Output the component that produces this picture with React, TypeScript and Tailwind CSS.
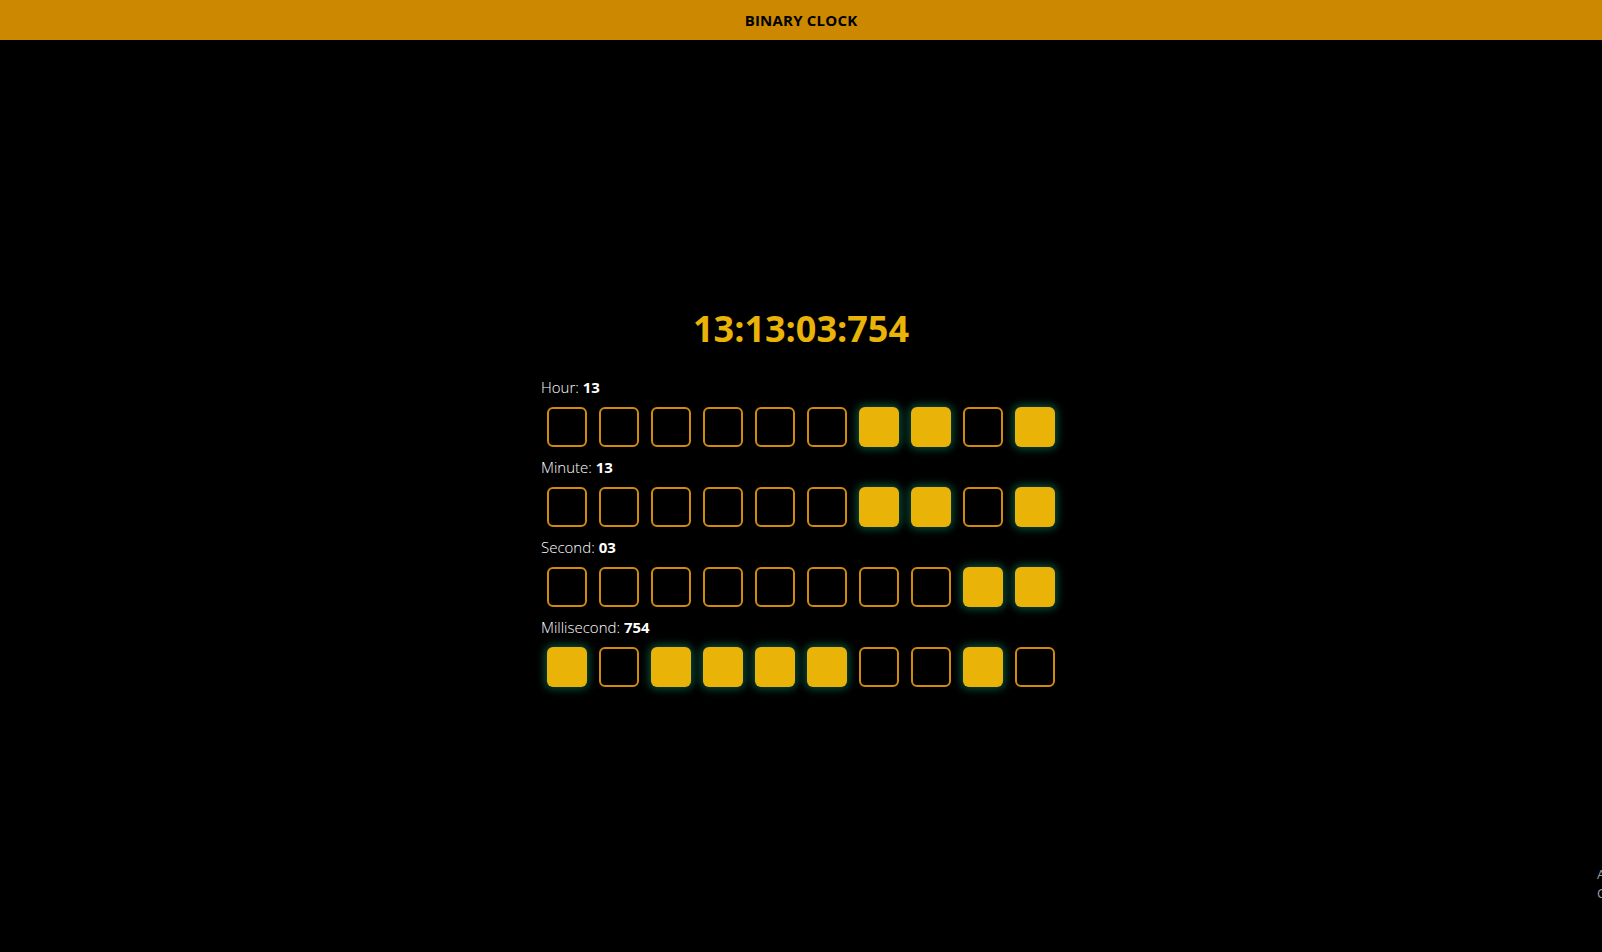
import React from 'react';

// 二进制时钟 - 静态快照 13:13:03:754
const FONT = { fontFamily: '"Open Sans", "Noto Sans", sans-serif' };

const toBits = (n: number) => n.toString(2).padStart(10, '0').split('').map((b) => b === '1');

const rows = [
  { label: 'Hour', value: '13', num: 13 },
  { label: 'Minute', value: '13', num: 13 },
  { label: 'Second', value: '03', num: 3 },
  { label: 'Millisecond', value: '754', num: 754 },
];

function BitBox({ on }: { on: boolean }) {
  return (
    <div
      className={`w-10 h-10 mx-[6px] rounded-[6px] ${
        on
          ? 'bg-[#eab308] shadow-[0_0_9px_2px_rgba(20,150,110,0.55)]'
          : 'border-2 border-[#d18a0c]'
      }`}
    />
  );
}

export default function App() {
  return (
    <div className="h-screen w-screen bg-black flex flex-col overflow-hidden relative" style={FONT}>
      {/* 顶部栏 */}
      <header className="h-10 shrink-0 bg-[#cc8800] flex items-center justify-center">
        <h1 className="text-[15px] font-bold text-black tracking-[0.2px]">BINARY CLOCK</h1>
      </header>

      <main className="flex-1 flex items-center justify-center">
        <div className="w-[520px] flex flex-col">
          <div className="text-center text-[36px] leading-[44px] font-bold text-[#eab308] pt-[2px] mb-[26px]">
            13:13:03:754
          </div>

          <div className="flex flex-col gap-[10px]">
            {rows.map((row) => (
              <div key={row.label}>
                <div className="text-[15px] leading-5 text-white font-light">
                  {row.label}: <span className="font-bold">{row.value}</span>
                </div>
                <div className="flex mt-[10px]">
                  {toBits(row.num).map((on, i) => (
                    <BitBox key={i} on={on} />
                  ))}
                </div>
              </div>
            ))}
          </div>
        </div>
      </main>

      {/* 右下角溢出的文字 */}
      <div className="absolute left-[1597px] top-[865px] text-[13px] leading-[19px] text-gray-400 whitespace-nowrap">
        <div>Ahmed</div>
        <div>Coding</div>
      </div>
    </div>
  );
}
